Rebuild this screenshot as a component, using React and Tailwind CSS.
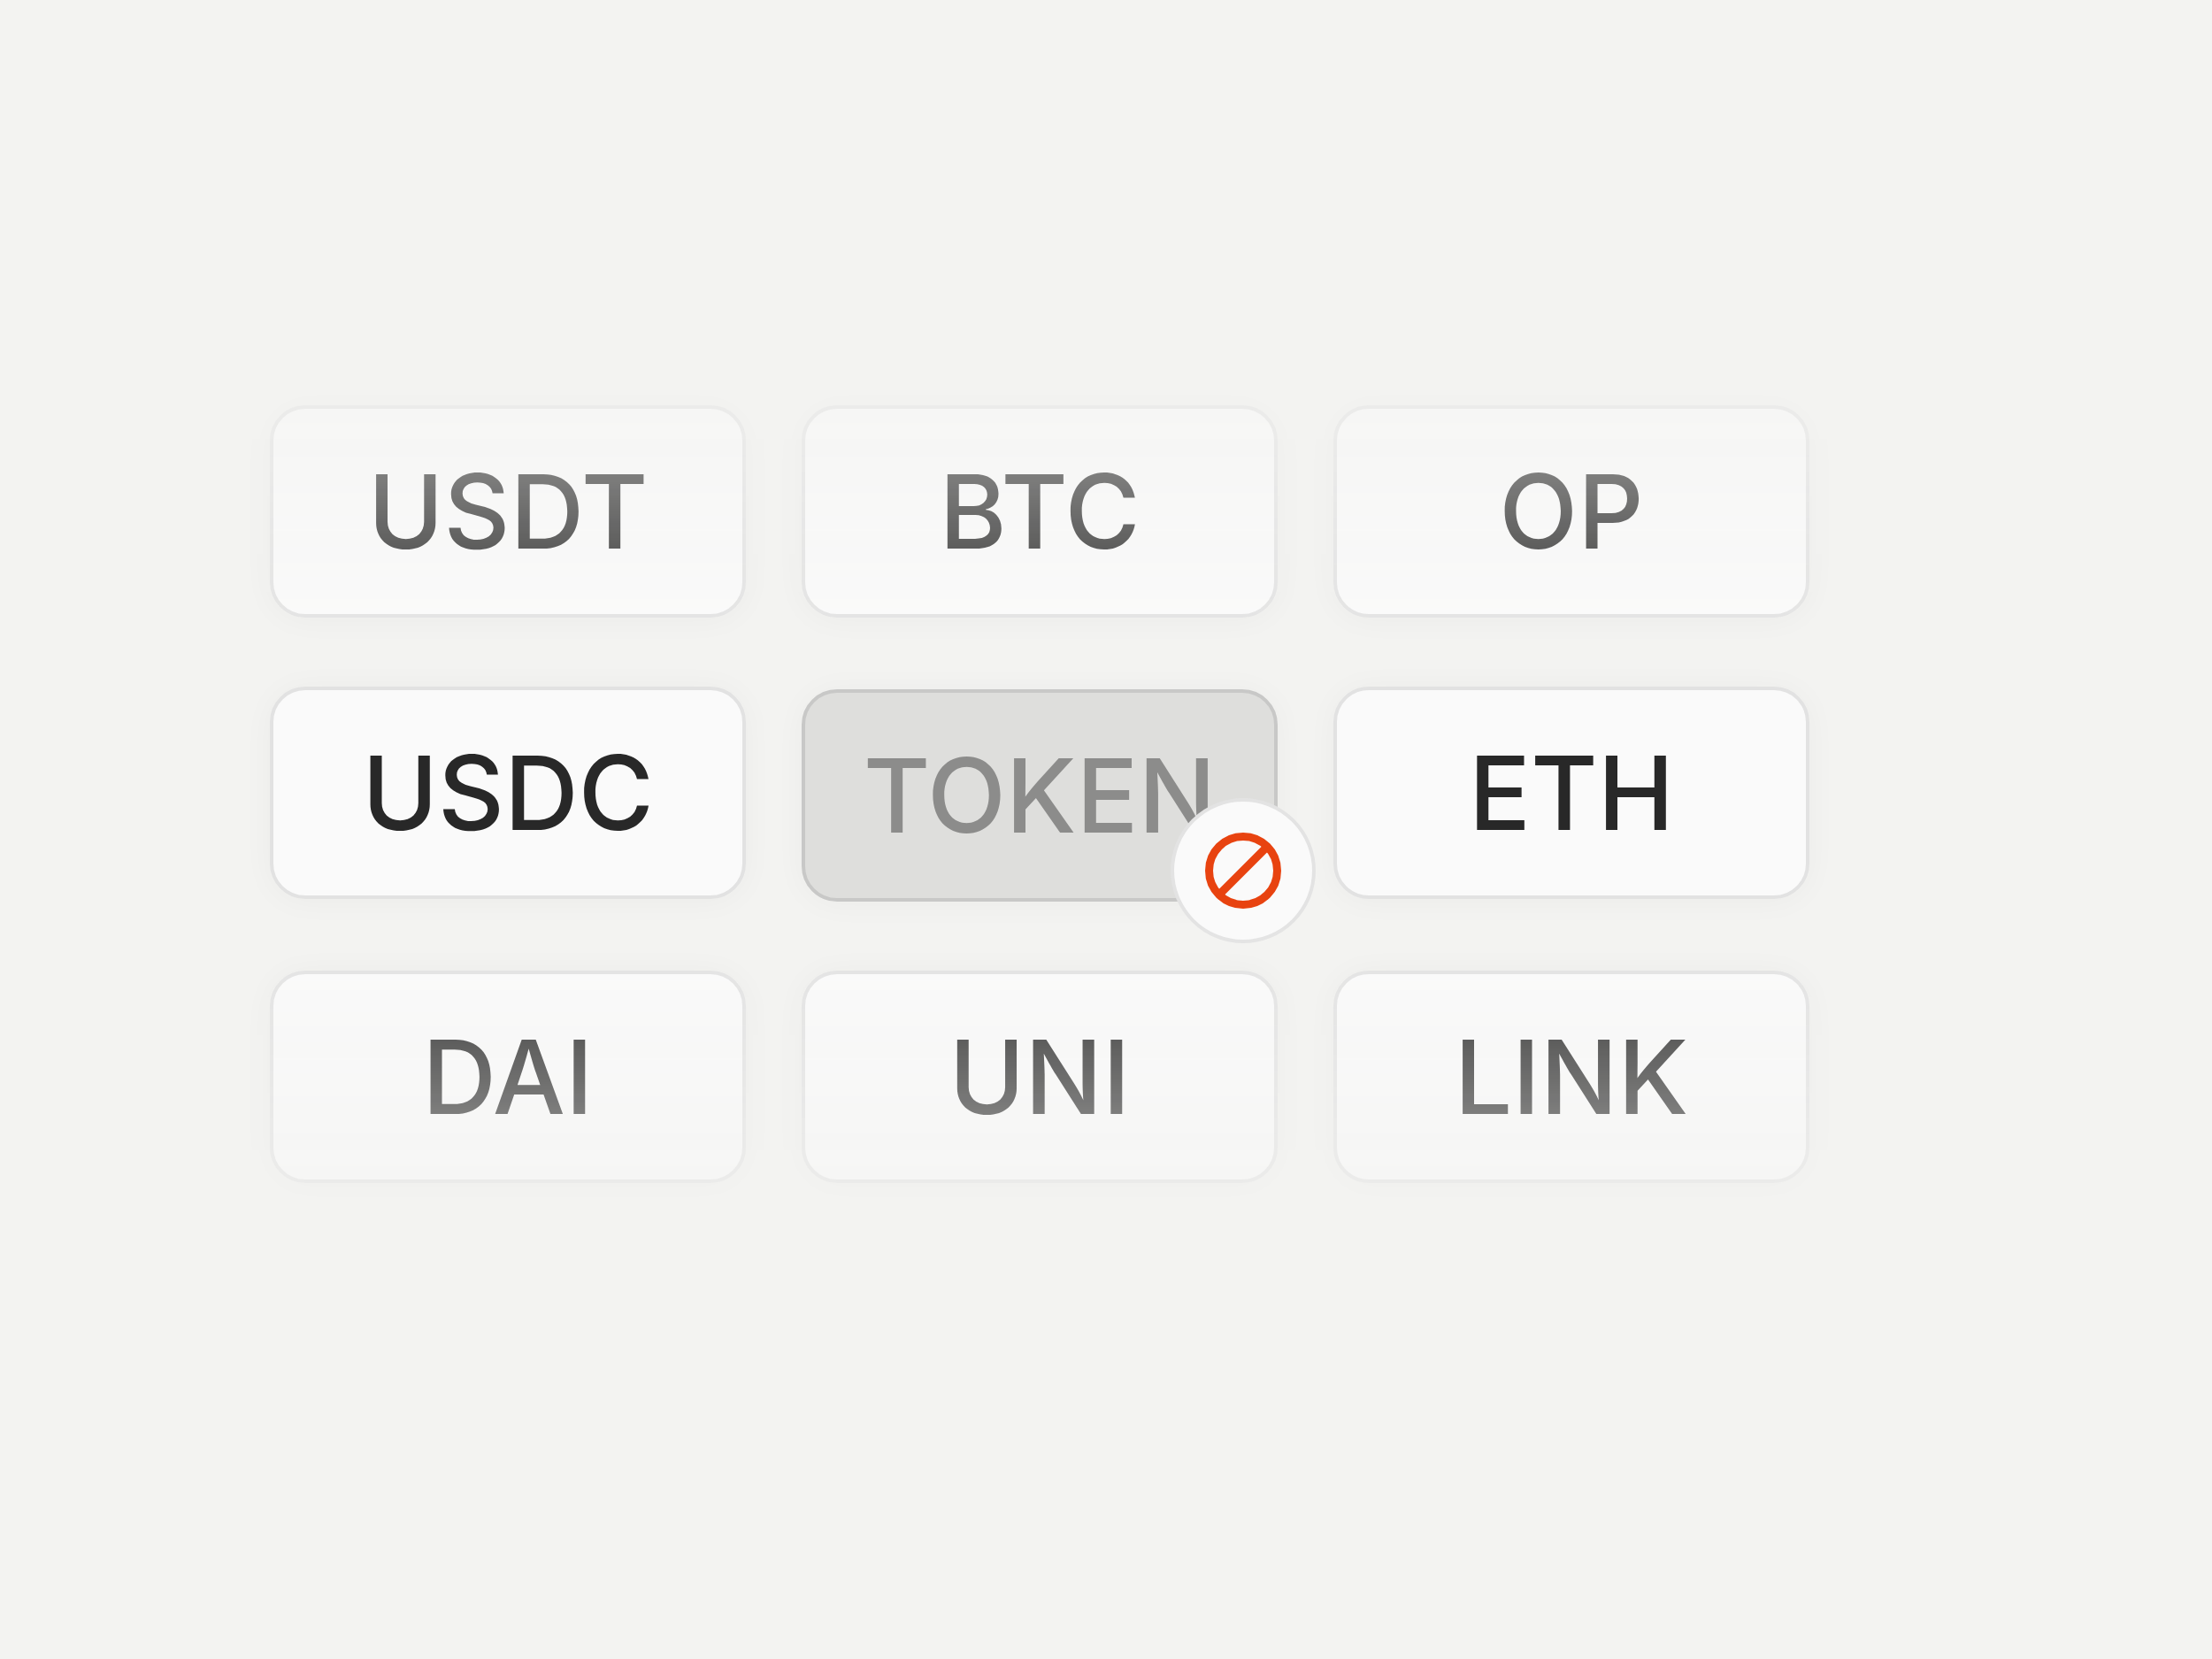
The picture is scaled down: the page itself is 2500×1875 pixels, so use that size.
const ROWS = [
  { id: 'top', tokens: ['USDT', 'BTC', 'OP'] },
  { id: 'middle', tokens: ['USDC', 'TOKEN', 'ETH'] },
  { id: 'bottom', tokens: ['DAI', 'UNI', 'LINK'] },
];

const BLOCKED = 'TOKEN';

const BlockedBadge = () => (
  <span className="absolute -right-[47px] -bottom-[51px] flex size-[164px] items-center justify-center rounded-full border-4 border-[#e3e3e3] bg-[#fafafa]">
    <svg
      className="size-[86px]"
      viewBox="0 0 86 86"
      fill="none"
      stroke="#e84310"
      strokeWidth="9"
      aria-hidden="true"
    >
      <circle cx="43" cy="43" r="38.5" />
      <path d="M16.5 69.5 69.5 16.5" />
    </svg>
  </span>
);

const TokenCard = ({ name }) => {
  const blocked = name === BLOCKED;

  return (
    <button
      type="button"
      disabled={blocked}
      className={`relative flex h-[240px] items-center justify-center rounded-[40px] border-4 text-[116px] leading-[144px] font-[450] shadow-[0_2px_36px_rgba(0,0,0,0.035)] ${
        blocked
          ? 'z-10 self-end border-[#c8c8c7] bg-[#dededc] text-[#8c8c8b]'
          : 'self-start border-[#e2e2e2] bg-[#fafafa] text-[#282828]'
      }`}
    >
      {name}
      {blocked && <BlockedBadge />}
    </button>
  );
};

const App = () => {
  return (
    <div className="min-h-screen bg-[#f3f3f1] font-['Inter',sans-serif]">
      {/* Rows above and below the middle one fade into the page */}
      <main className="flex min-h-screen flex-col gap-[78px] pt-[458px] pr-[455px] pb-[458px] pl-[305px] mask-[linear-gradient(to_bottom,transparent_237px,black_755px,black_1041px,transparent_1559px)]">
        {ROWS.map((row) => (
          <div
            key={row.id}
            className={`grid grid-cols-3 gap-[63px] ${row.id === 'middle' ? 'min-h-[243px]' : ''}`}
          >
            {row.tokens.map((name) => (
              <TokenCard key={name} name={name} />
            ))}
          </div>
        ))}
      </main>
    </div>
  );
};

export default App;
